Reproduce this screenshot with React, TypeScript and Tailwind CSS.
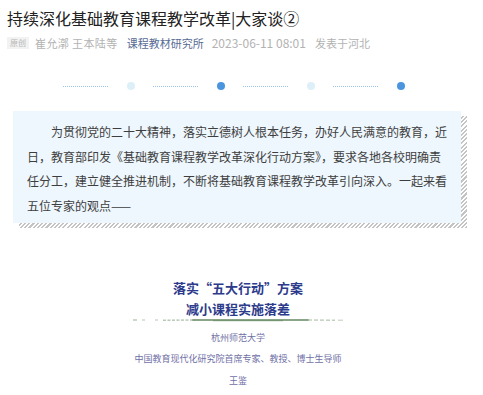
import React from 'react';

const sans = { fontFamily: '"Noto Sans CJK SC", "Noto Sans", sans-serif' };

function Divider() {
  const items = ['light', 'blue', 'light', 'blue'];
  return (
    <div className="ml-[63px] flex items-center gap-[18.5px] h-[8px]">
      {items.map((kind, i) => (
        <React.Fragment key={i}>
          <div className="w-[45px] border-t border-dotted border-[#9cc3ea]" />
          {kind === 'blue' ? (
            <div className="w-[8px] h-[8px] rounded-full bg-[#4a95de]" />
          ) : (
            <div className="w-[8px] h-[8px] rounded-full bg-[#ddeff8]" />
          )}
        </React.Fragment>
      ))}
    </div>
  );
}

function BrushLine() {
  return (
    <svg width="210" height="6" viewBox="0 0 210 6" className="block mx-auto -mt-[3px]">
      <line x1="0" y1="3" x2="4" y2="3" stroke="#6f8f6a" strokeWidth="1" opacity="0.7" />
      <line x1="9" y1="3" x2="12" y2="3" stroke="#6f8f6a" strokeWidth="1" opacity="0.5" />
      <line x1="22" y1="3" x2="25" y2="3" stroke="#6f8f6a" strokeWidth="1" opacity="0.5" />
      <line x1="30" y1="3.2" x2="62" y2="3" stroke="#7f9b78" strokeWidth="1" strokeDasharray="3 1.5" opacity="0.8" />
      <path d="M60 3 L 175 3" stroke="#4a7345" strokeWidth="1.6" fill="none" strokeLinecap="round" opacity="0.85" />
      <path d="M80 3.8 L 150 3.8" stroke="#3f6b3a" strokeWidth="0.8" fill="none" opacity="0.5" />
      <line x1="175" y1="3" x2="202" y2="3.2" stroke="#7f9b78" strokeWidth="1" strokeDasharray="4 2" opacity="0.7" />
      <line x1="205" y1="3.2" x2="210" y2="3.2" stroke="#7f9b78" strokeWidth="1" opacity="0.5" />
    </svg>
  );
}

export default function App() {
  return (
    <div className="w-[483px] h-[395px] overflow-hidden bg-white" style={sans}>
      <h1 className="pt-[6px] pl-[7px] text-[16px] leading-[24px] text-[#222222] font-normal">
        持续深化基础教育课程教学改革|大家谈②
      </h1>

      <div className="mt-[5px] pl-[7px] flex items-center h-[16px] text-[11px] text-[#b2b2b2]">
        <span className="w-[22px] h-[12px] bg-[#f2f2f2] text-[8px] leading-[12px] text-center text-[#b6b6b6]">
          原创
        </span>
        <span className="ml-[6px] tracking-[0.4px]">崔允漷 王本陆等</span>
        <span className="ml-[9px] text-[#576b95]">课程教材研究所</span>
        <span className="ml-[8px] text-[12px]">2023-06-11 08:01</span>
        <span className="ml-[9px]">发表于河北</span>
      </div>

      <div className="mt-[31px]">
        <Divider />
      </div>

      <div className="mt-[21px] ml-[13px] w-[448px] relative">
        <div className="absolute left-[6px] top-[5px] w-[448px] h-full bg-[repeating-linear-gradient(135deg,#ffffff_0px,#ffffff_1.5px,#c4c4c4_1.5px,#c4c4c4_3px)]" />
        <div className="relative bg-[#eef7fd] h-[112px] px-[14px] pt-[9px] text-[12px] leading-[24.5px] text-[#3e3e3e]">
          <p className="indent-[24px]">
            为贯彻党的二十大精神，落实立德树人根本任务，办好人民满意的教育，近日，教育部印发《基础教育课程教学改革深化行动方案》，要求各地各校明确责任分工，建立健全推进机制，不断将基础教育课程教学改革引向深入。一起来看五位专家的观点——
          </p>
        </div>
      </div>

      <div className="mt-[54px] pr-[7px] text-center">
        <div className="text-[13px] leading-[22px] font-bold text-[#2d3b8c]">
          <p>落实“五大行动”方案</p>
          <p className="-mt-[1px]">减小课程实施落差</p>
        </div>
        <BrushLine />
        <p className="mt-[7px] text-[9px] leading-[16px] text-[#6f6fa6]">杭州师范大学</p>
        <p className="mt-[5px] text-[9px] leading-[16px] text-[#6f6fa6]">
          中国教育现代化研究院首席专家、教授、博士生导师
        </p>
        <p className="mt-[6px] text-[9px] leading-[16px] text-[#6f6fa6]">王鉴</p>
      </div>
    </div>
  );
}
